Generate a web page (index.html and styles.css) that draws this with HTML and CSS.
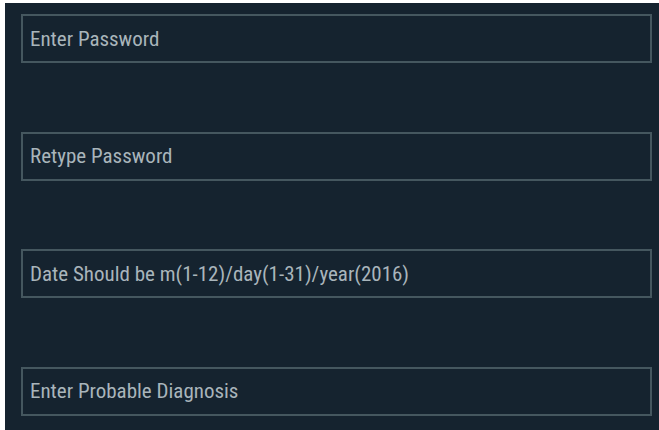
FILE: index.html
```html
<!DOCTYPE html>
<html lang="en">
<head>
<meta charset="utf-8">
<title>Patient Form</title>
<link rel="stylesheet" href="styles.css">
</head>
<body>
<form class="panel">
  <input class="field" type="password" placeholder="Enter Password">
  <input class="field" type="password" placeholder="Retype Password">
  <input class="field" type="text" placeholder="Date Should be m(1-12)/day(1-31)/year(2016)">
  <input class="field" type="text" placeholder="Enter Probable Diagnosis">
</form>
</body>
</html>
```

FILE: styles.css
```css
html, body {
  margin: 0;
  padding: 0;
  background: #ffffff;
}

.panel {
  box-sizing: border-box;
  margin: 3px 0 0 5px;
  height: 427px;
  padding: 11px 7px 0 16px;
  background: #15232f;
  display: flex;
  flex-direction: column;
  gap: 68.5px;
}

.field {
  box-sizing: border-box;
  width: 100%;
  height: 49px;
  margin: 0;
  padding: 0 7px;
  background: #15232f;
  border: 2px solid #45575f;
  border-radius: 0;
  font-family: "Liberation Sans Narrow", "Roboto Condensed", "Liberation Sans", sans-serif;
  font-size: 21px;
  color: #a9b5bb;
  outline: none;
}

.field::placeholder {
  color: #a9b5bb;
  opacity: 1;
}
```
